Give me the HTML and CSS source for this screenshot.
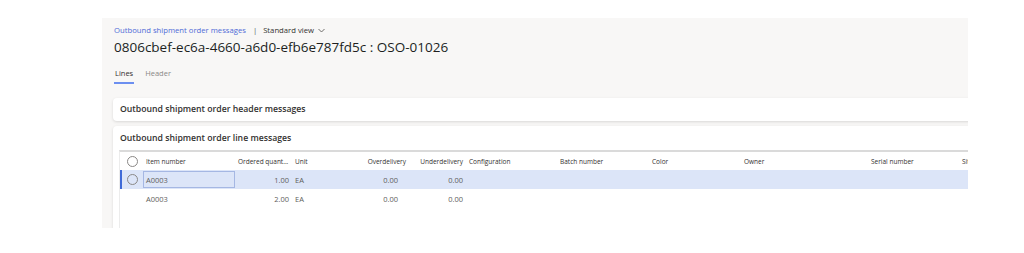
FILE: index.html
```html
<!DOCTYPE html>
<html lang="en">
<head>
    <meta charset="UTF-8">
    <title>Outbound shipment order messages</title>
    <link rel="stylesheet" href="styles.css">
</head>
<body>
    <div class="panel">
        <div class="breadcrumb">
            <a class="crumb-link">Outbound shipment order messages</a>
            <span class="crumb-sep">|</span>
            <span class="view-name">Standard view</span>
            <svg class="chevron" width="7" height="5" viewBox="0 0 7 5"><path d="M0.5 1 L3.5 4 L6.5 1" fill="none" stroke="#605e5c" stroke-width="0.9"/></svg>
        </div>
        <h1 class="title">0806cbef-ec6a-4660-a6d0-efb6e787fd5c : OSO-01026</h1>
        <div class="tabs">
            <span class="tab active">Lines</span>
            <span class="tab">Header</span>
        </div>

        <section class="card collapsed">
            <h2 class="card-title">Outbound shipment order header messages</h2>
        </section>

        <section class="card">
            <h2 class="card-title">Outbound shipment order line messages</h2>
            <div class="grid">
                <div class="grid-row head">
                    <span class="check"><span class="circle"></span></span>
                    <span class="cell">Item number</span>
                    <span class="cell trunc">Ordered quant...</span>
                    <span class="cell">Unit</span>
                    <span class="cell num head-num">Overdelivery</span>
                    <span class="cell num">Underdelivery</span>
                    <span class="cell">Configuration</span>
                    <span class="cell">Batch number</span>
                    <span class="cell">Color</span>
                    <span class="cell">Owner</span>
                    <span class="cell">Serial number</span>
                    <span class="cell">Site</span>
                </div>
                <div class="grid-row selected">
                    <span class="check"><span class="circle"></span></span>
                    <span class="cell"><span class="edit-box">A0003</span></span>
                    <span class="cell num">1.00</span>
                    <span class="cell">EA</span>
                    <span class="cell num over">0.00</span>
                    <span class="cell num">0.00</span>
                    <span class="cell"></span>
                    <span class="cell"></span>
                    <span class="cell"></span>
                    <span class="cell"></span>
                    <span class="cell"></span>
                    <span class="cell"></span>
                </div>
                <div class="grid-row">
                    <span class="check"></span>
                    <span class="cell">A0003</span>
                    <span class="cell num">2.00</span>
                    <span class="cell">EA</span>
                    <span class="cell num over">0.00</span>
                    <span class="cell num">0.00</span>
                    <span class="cell"></span>
                    <span class="cell"></span>
                    <span class="cell"></span>
                    <span class="cell"></span>
                    <span class="cell"></span>
                    <span class="cell"></span>
                </div>
            </div>
        </section>
    </div>
</body>
</html>
```

FILE: styles.css
```css
body {
    margin: 0;
    background-color: #ffffff;
    font-family: "Open Sans", "Noto Sans", sans-serif;
    color: #323130;
}

.panel {
    margin: 18px 0 0 102px;
    width: 866px;
    height: 210px;
    padding: 6px 0 0 12px;
    box-sizing: border-box;
    background-color: #f8f7f6;
    overflow: hidden;
}

.breadcrumb {
    display: flex;
    align-items: center;
    height: 12px;
    font-size: 7.7px;
    white-space: nowrap;
}

.crumb-link {
    color: #4f6bd6;
}

.crumb-sep {
    margin: 0 6px 0 7px;
    color: #605e5c;
}

.view-name {
    color: #323130;
}

.chevron {
    margin-left: 4px;
}

.title {
    margin: 1px 0 0;
    font-size: 13.5px;
    line-height: 20px;
    font-weight: 400;
    color: #201f1e;
    white-space: nowrap;
}

.tabs {
    display: flex;
    gap: 10px;
    margin-top: 10px;
    font-size: 7.5px;
    line-height: 12px;
}

.tab {
    padding: 0 1px 3px;
    color: #8a8886;
    border-bottom: 2px solid transparent;
}

.tab.active {
    color: #323130;
    border-bottom-color: #6c8ff0;
}

.card {
    margin: 14px -40px 0 -1px;
    background-color: #ffffff;
    border-radius: 4px;
    box-shadow: 0 1px 3px rgba(0, 0, 0, 0.13);
}

.card + .card {
    margin-top: 5px;
}

.card-title {
    margin: 0;
    padding: 0 7px;
    font-size: 8.7px;
    line-height: 23px;
    font-weight: 600;
    color: #323130;
    white-space: nowrap;
}

.card:not(.collapsed) .card-title {
    line-height: 24px;
}

.grid {
    margin-left: 6px;
    border-top: 2px solid #dadada;
    border-left: 1px solid #ececec;
    height: 90px;
}

.grid-row {
    display: grid;
    grid-template-columns: 23px 92px 57px 38px 80px 56px 91px 92px 92px 127px 91px 60px;
    height: 19px;
    align-items: center;
    font-size: 7.5px;
    color: #605e5c;
    white-space: nowrap;
}

.grid-row.head {
    height: 18px;
    font-size: 6.5px;
    color: #323130;
}

.grid-row.selected {
    background-color: #dce5f8;
    box-shadow: inset 2px 0 0 #3f6ad8;
}

.check {
    display: flex;
    justify-content: center;
    padding-left: 1px;
}

.circle {
    width: 9px;
    height: 9px;
    border: 1px solid #8a8886;
    border-radius: 50%;
    background-color: #ffffff;
}

.selected .circle {
    background-color: transparent;
}

.cell {
    padding: 0 3px;
    overflow: hidden;
}

.trunc {
    text-overflow: clip;
}

.num {
    text-align: right;
}

.head-num {
    padding-right: 4px;
}

.over {
    padding-right: 12px;
}

.edit-box {
    display: block;
    margin-left: -3px;
    margin-right: -3px;
    height: 17px;
    line-height: 17px;
    padding-left: 2px;
    border: 1px solid #a5b7e3;
    box-sizing: border-box;
}
```
